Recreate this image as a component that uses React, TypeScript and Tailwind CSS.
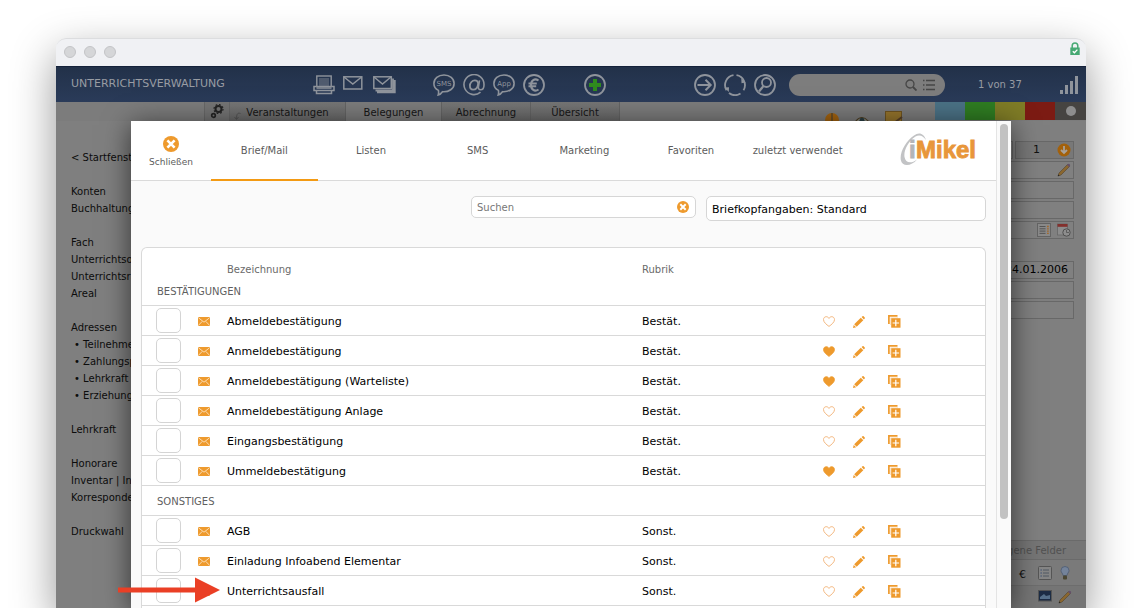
import { useState } from "react";

interface Entry {
  name: string;
  favorite: boolean;
}

interface Group {
  title: string;
  short: string;
  entries: Entry[];
}

const groups: Group[] = [
  {
    title: "BESTÄTIGUNGEN",
    short: "Bestät.",
    entries: [
      { name: "Abmeldebestätigung", favorite: false },
      { name: "Anmeldebestätigung", favorite: true },
      { name: "Anmeldebestätigung (Warteliste)", favorite: true },
      { name: "Anmeldebestätigung Anlage", favorite: false },
      { name: "Eingangsbestätigung", favorite: false },
      { name: "Ummeldebestätigung", favorite: true },
    ],
  },
  {
    title: "SONSTIGES",
    short: "Sonst.",
    entries: [
      { name: "AGB", favorite: false },
      { name: "Einladung Infoabend Elementar", favorite: false },
      { name: "Unterrichtsausfall", favorite: false },
    ],
  },
];

const dialogTabs = [
  "Brief/Mail",
  "Listen",
  "SMS",
  "Marketing",
  "Favoriten",
  "zuletzt verwendet",
];

// Each inner list is one block of the side menu
const menu = [
  ["< Startfenster"],
  ["Konten", "Buchhaltung"],
  ["Fach", "Unterrichtsort", "Unterrichtsraum", "Areal"],
  ["Adressen", "• Teilnehmer", "• Zahlungspfl.", "• Lehrkraft", "• Erziehungsb."],
  ["Lehrkraft"],
  ["Honorare", "Inventar | Info", "Korrespondenz"],
  ["Druckwahl"],
];

const iconButton = "flex items-center justify-center";

const CloseIcon = ({ className }: { className: string }) => (
  <svg viewBox="0 0 16 16" className={className}>
    <circle cx="8" cy="8" r="8" fill="#ee9a2d" />
    <path d="M4.400 4.400l7.200 7.200M11.600 4.400l-7.200 7.200" stroke="#fff" strokeWidth="2.600" />
  </svg>
);

const EnvelopeIcon = () => (
  <svg viewBox="0 0 12 9" className="h-[9px] w-3">
    <rect width="12" height="9" rx="1" fill="#ee9a2d" />
    <path
      d="M.5 .8l5.500 4.400L11.500 .8M.5 8.300l3.700-3.900M11.500 8.300L7.800 4.400"
      fill="none"
      stroke="#fde3c0"
      strokeWidth=".9"
    />
  </svg>
);

const HeartIcon = ({ filled }: { filled: boolean }) => (
  <svg viewBox="0 0 12 11" className="h-[11px] w-3">
    <path
      d="M6 10.400C3.500 8.600.5 6.200.5 3.600.5 1.900 1.700.7 3.200.7 4.400.7 5.400 1.300 6 2.400 6.600 1.300 7.600.7 8.800.7c1.500 0 2.700 1.200 2.700 2.900 0 2.600-3 5-5.500 6.800z"
      fill={filled ? "#ee9a2d" : "none"}
      stroke={filled ? "#ee9a2d" : "#f3b77f"}
      strokeWidth={filled ? ".8" : "1"}
    />
  </svg>
);

const PencilIcon = () => (
  <svg viewBox="0 0 12 12" className="size-3" fill="#ee9a2d">
    <path d="M7.800 1.700l2.500 2.500-6.600 6.600-2.500-2.500zM8.600 1.100l.9-.8q.6-.5 1.100 0l1.100 1.100q.5.500 0 1.100l-.8.900zM.7 8.900l2.400 2.400L0 12z" />
  </svg>
);

const DuplicateIcon = () => (
  <svg viewBox="0 0 13 13" className="size-[13px]">
    <path d="M.9 9V.9H9.500" fill="none" stroke="#ee9a2d" strokeWidth="1.700" />
    <path d="M2.600 10V2.800H10" fill="none" stroke="#f8cf9a" strokeWidth=".6" />
    <rect x="3.200" y="3.200" width="9.300" height="9.500" fill="#ee9a2d" />
    <path d="M7.800 4.700v6.600M4.600 8h6.500" stroke="#fff" strokeWidth="1.200" />
  </svg>
);

const ColorPencilIcon = () => (
  <svg viewBox="0 0 14 14" className="size-3.5">
    <path d="M1 13l1-3 8.500-8.500 2 2L4 12z" fill="#8a672f" stroke="#4a3c28" strokeWidth=".5" />
    <path d="M10 2l1-1q1-.5 1.700.2T13 3l-1 1z" fill="#64506a" />
    <path d="M.8 13.200l.6-1.700 1.100 1.100z" fill="#222" />
  </svg>
);

const PrinterIcon = () => (
  <svg viewBox="0 0 22 20" className="h-5 w-[22px]" fill="none" stroke="#8f949c">
    <rect x="3.800" y="1" width="14.400" height="10.500" strokeWidth="1.400" />
    <path d="M6 4h10M6 6h10M6 8h10M6 10h10" strokeWidth=".8" />
    <path d="M3.500 11.500H1v4h20v-4h-2.500M3.500 13h15M3.500 15.500v3h15v-3" strokeWidth="1.500" />
  </svg>
);

const MailIcon = () => (
  <svg viewBox="0 0 22 20" className="h-5 w-[22px]" fill="none" stroke="#8f949c" strokeWidth="1.500">
    <rect x=".8" y="1.800" width="18" height="12.200" />
    <path d="M1 2l8.800 7L18.600 2" />
  </svg>
);

const MailStackIcon = () => (
  <svg viewBox="0 0 24 20" className="h-5 w-6" fill="none" stroke="#8f949c" strokeWidth="1.500">
    <path d="M20 3.500v12H2.500M21.800 5v12.300H4" strokeWidth="1.800" />
    <rect x=".8" y="1.800" width="17.500" height="11.700" />
    <path d="M1 2l8.500 7L18 2" />
  </svg>
);

const SpeechIcon = ({ text }: { text: string }) => (
  <svg viewBox="0 0 22 22" className="size-[22px]">
    <path
      d="M11 1C5.200 1 .9 4.700.9 9.400c0 3 1.700 5.500 4.500 7 .3 1.500.3 3-.2 4.600 1.900-.6 3.300-1.800 4.300-3.300 6.400.5 11.600-3 11.600-8.300C21.100 4.700 16.800 1 11 1z"
      fill="none"
      stroke="#8f949c"
      strokeWidth="1.600"
    />
    <text x="11" y="12" textAnchor="middle" fontSize="7" fill="#8f949c">
      {text}
    </text>
  </svg>
);

const CircleIcon = ({ children }: { children: React.ReactNode }) => (
  <svg viewBox="0 0 22 22" className="size-[22px]" fill="none" stroke="#8f949c">
    <circle cx="11" cy="11" r="10" strokeWidth="1.800" />
    {children}
  </svg>
);

const Logo = () => (
  <svg viewBox="0 0 80 36" className="mb-1 h-9 w-20">
    <path
      d="M14 4.500C19 .5 24 2.500 26 9 23.500 5 19.500 3 15.500 5.500 8 10 3.500 20 4.500 26 5.500 31.500 10.500 33.500 17 28.500 11.500 35.500 2 36 .8 29-.5 21 6 10 14 4.500z"
      fill="#c2c3c5"
    />
    <text y="27" fontFamily="Liberation Sans, Arial, sans-serif" fontWeight="700" fontSize="24" strokeWidth=".9">
      <tspan x="9" fill="#b4b5b7" stroke="#b4b5b7">
        i
      </tspan>
      <tspan x="16" fill="#e8963a" stroke="#e8963a">
        Mikel
      </tspan>
    </text>
  </svg>
);

const TitleBar = () => (
  <div className="flex h-7 shrink-0 items-center gap-2 rounded-t-[10px] border-t border-[#dcdddf] bg-[#f0f1f4] pr-1.5 pb-0.5 pl-2">
    <span className="size-3 rounded-full border border-[#c3c4c7] bg-[#d5d6d8]" />
    <span className="size-3 rounded-full border border-[#c3c4c7] bg-[#d5d6d8]" />
    <span className="size-3 rounded-full border border-[#c3c4c7] bg-[#d5d6d8]" />
    <svg viewBox="0 0 10 14" className="mb-1.5 ml-auto h-3.5 w-2.5">
      <path d="M2.200 6V3.700a2.800 2.800 0 015.600 0V6" fill="none" stroke="#46a973" strokeWidth="1.500" />
      <rect x=".3" y="5.500" width="9.400" height="7.500" fill="#46a973" />
      <path d="M2.800 9.200l1.600 1.600 3-3.200" fill="none" stroke="#fff" strokeWidth="1.300" />
    </svg>
  </div>
);

const Toolbar = () => (
  <header className="flex h-9 shrink-0 items-center border-t border-[#14213a] bg-gradient-to-b from-[#223149] to-[#2a3b59] pr-2 pl-[15px] text-[#989ca3]">
    <h1 className="w-[242px] text-[11px] font-medium">UNTERRICHTSVERWALTUNG</h1>
    <div className="flex gap-2">
      <button aria-label="Drucken"><PrinterIcon /></button>
      <button aria-label="Mail"><MailIcon /></button>
      <button aria-label="Serienmail"><MailStackIcon /></button>
    </div>
    <div className="ml-9 flex gap-2">
      <button aria-label="SMS"><SpeechIcon text="SMS" /></button>
      <button aria-label="E-Mail">
        <svg viewBox="0 0 22 22" className="size-[22px]" fill="none" stroke="#8f949c">
          <path d="M17.500 18.200A10 10 0 1121 11c0 3-1.500 4.700-3.400 4.700-1.800 0-2.500-1.200-2.100-3.200l1-6.200" strokeWidth="1.600" />
          <path d="M15.200 9.600c-.2-2-1.500-3.200-3.300-3.200-2.800 0-5 2.500-5 5.400 0 2.300 1.300 3.800 3.200 3.800 2.700 0 4.700-2.500 5.100-6z" strokeWidth="1.800" />
        </svg>
      </button>
      <button aria-label="App"><SpeechIcon text="App" /></button>
      <button aria-label="Zahlung">
        <CircleIcon>
          <path d="M15.500 6.500c-4-2.800-7.500 0-7.500 4.500s3.500 7.300 7.500 4.500M5.500 9.500h8.300M5.500 12.300h7.700" strokeWidth="2.100" />
        </CircleIcon>
      </button>
    </div>
    <button aria-label="Neu" className="ml-[39px]">
      <CircleIcon>
        <path d="M11 5v12M5 11h12" stroke="#2f8a1e" strokeWidth="4" />
      </CircleIcon>
    </button>
    <div className="ml-[88px] flex gap-2">
      <button aria-label="Weiter">
        <CircleIcon>
          <path d="M3.500 11h13M11.500 5.800l5.200 5.200-5.200 5.200" strokeWidth="2" />
        </CircleIcon>
      </button>
      <button aria-label="Aktualisieren">
        <svg viewBox="0 0 22 22" className="size-[22px]" fill="none" stroke="#8f949c" strokeWidth="1.800">
          <path d="M9.500 1.200A10 10 0 002.500 16.200M5 19a10 10 0 0011.500.5M12.500 1.200a10 10 0 017 15" />
          <path d="M.5 13.500l4.300 4.500.2-4.800zM21.700 8.500l-4.400-4 .2 4.800z" fill="#8f949c" stroke="none" />
        </svg>
      </button>
      <button aria-label="Finden">
        <CircleIcon>
          <circle cx="12.500" cy="8.500" r="4.500" strokeWidth="1.800" />
          <path d="M9.500 12l-4.500 5.500" strokeWidth="2.200" />
        </CircleIcon>
      </button>
    </div>
    <label className="ml-[13px] flex h-[22px] w-[156px] items-center gap-1.5 rounded-full bg-[#7d7d7d] pr-2.5 pl-3">
      <input aria-label="Schnellsuche" className="min-w-0 flex-1 text-[10px] outline-none" />
      <svg viewBox="0 0 12 12" className="size-3" fill="none" stroke="#464646" strokeWidth="1.300">
        <circle cx="5" cy="5" r="4" />
        <path d="M8 8l3.500 3.500" strokeWidth="1.800" />
      </svg>
      <svg viewBox="0 0 12 12" className="size-3" stroke="#464646" strokeWidth="1.300">
        <path d="M0 1.500h1.500M3 1.500h9M0 6h1.500M3 6h9M0 10.500h1.500M3 10.500h9" />
      </svg>
    </label>
    <span className="ml-[33px] text-[10px] font-medium">1 von 37</span>
    <svg viewBox="0 0 18 18" className="ml-auto size-[18px]" fill="#8f949c">
      <path d="M0 14h3v4H0zM5 9h3v9H5zM10 5h3v13h-3zM15 0h3v18h-3z" />
    </svg>
  </header>
);

const ModuleTabs = () => (
  <nav className="flex h-[19px] shrink-0 bg-[#7c7c7c] pl-[148px] text-[10px] text-[#161616]">
    <button aria-label="Einstellungen" className="flex w-[26px] justify-center border-x border-[#686868] bg-[#757575] pt-0.5">
      <svg viewBox="0 0 14 15" className="h-[15px] w-3.5" fill="none" stroke="#242424">
        <circle cx="8.500" cy="5" r="3" strokeWidth="2" />
        <circle cx="8.500" cy="5" r="4.500" strokeWidth="1.200" strokeDasharray="1.700 1.830" />
        <circle cx="3.500" cy="11.500" r="1.800" strokeWidth="1.700" />
      </svg>
    </button>
    <button className="relative w-[116px] border-r border-[#646464] bg-gradient-to-b from-[#767676] to-[#6a6a6a] pt-0.5">
      <svg viewBox="0 0 7 9" className="absolute bottom-0 left-1 h-[9px] w-[7px]" fill="none" stroke="#555">
        <path d="M6.500 1.500C3.500.5 2.500 2 2.500 7M.5 5l2 2.500L4.500 5" />
      </svg>
      Veranstaltungen
    </button>
    <button className="w-24 border-r border-[#646464] pt-0.5">Belegungen</button>
    <button className="w-[89px] border-r border-[#646464] bg-gradient-to-b from-[#767676] to-[#6a6a6a] pt-0.5">
      Abrechnung
    </button>
    <button className="w-[89px] border-r border-[#646464] bg-gradient-to-b from-[#767676] to-[#6a6a6a] pt-0.5">
      Übersicht
    </button>
    <div className="ml-auto flex items-start gap-4 pt-[9px] pr-8">
      <svg viewBox="0 0 14 14" className="mt-0.5 size-3.5">
        <circle cx="7" cy="7" r="7" fill="#a5640f" />
        <path d="M7 0v9" stroke="#5f4a2a" strokeWidth="1.500" />
      </svg>
      <svg viewBox="0 0 16 12" className="mt-1 h-3 w-3.5">
        <path d="M1 6q7-8 14 0-7 6-14 0z" fill="#8a8a80" stroke="#4d3d20" strokeWidth="1.300" />
        <circle cx="8" cy="5" r="2.800" fill="#2a3f44" />
      </svg>
      <svg viewBox="0 0 18 16" className="h-4 w-[18px]">
        <rect x=".5" y=".5" width="16" height="15" fill="#96752c" stroke="#6f5420" />
        <path d="M9 12l8-6" stroke="#584028" strokeWidth="2" />
      </svg>
    </div>
    <div className="flex h-[18px]">
      <button aria-label="Blau" className="w-[30px] bg-[#4b7286]" />
      <button aria-label="Grün" className="w-[30px] bg-[#2f7d22]" />
      <button aria-label="Gelb" className="w-[30px] bg-[#7f7c26]" />
      <button aria-label="Rot" className="w-[30px] bg-[#7c1b13]" />
      <button aria-label="Grau" className="flex w-[31px] items-center justify-center bg-[#464441]">
        <span className="size-2.5 rounded-full bg-[#8d8d8d]" />
      </button>
    </div>
  </nav>
);

const field = "flex h-[18px] items-center justify-end border border-[#686868] bg-[#808080]";

const RecordPanel = () => (
  <div className="w-[186px] text-[#111]">
    <div className="flex flex-col gap-0.5 pt-5 pr-3">
      <div className="flex gap-0.5">
        <div className={`${field} flex-1`} />
        <div className="flex h-[18px] w-[59px] items-center justify-between border border-[#686868] bg-[#787878] pr-0.5 pl-[17px] text-[11px]">
          1
          <svg viewBox="0 0 14 14" className="size-3.5">
            <circle cx="7" cy="7" r="6.500" fill="#a3610b" />
            <path d="M7 3v7M4 7l3 3 3-3" fill="none" stroke="#a8a29a" strokeWidth="1.800" />
          </svg>
        </div>
      </div>
      <div className={`${field} pr-0.5`}><ColorPencilIcon /></div>
      <div className={field} />
      <div className={field} />
      <div className={`${field} gap-1.5 pr-0.5`}>
        <svg viewBox="0 0 14 14" className="size-3.5">
          <rect x=".5" y=".5" width="13" height="13" fill="#8a8a8a" stroke="#646464" />
          <path d="M2.500 3.500h6M2.500 5.800h6M2.500 8.100h6M2.500 10.400h6" stroke="#555" />
          <path d="M10 3.500h1.800M10 5.800h1.800M10 8.100h1.800M10 10.400h1.800" stroke="#a36a2e" strokeWidth="1.300" />
        </svg>
        <svg viewBox="0 0 14 14" className="size-3.5">
          <rect x=".5" y="1" width="10" height="11" fill="#8c8c8c" stroke="#666" strokeWidth=".8" />
          <rect x=".5" y="1" width="10" height="2.800" fill="#83302d" />
          <circle cx="9.500" cy="9.500" r="3.700" fill="#8d8d8d" stroke="#505050" />
          <path d="M9.500 7v2.500h2.500" fill="none" stroke="#505050" strokeWidth=".8" />
        </svg>
      </div>
      <div className={`${field} mt-5 pr-[5px] text-[11px] text-black`}>24.01.2006</div>
      <div className={field} />
      <div className={field} />
    </div>
    <div className="mt-[221px] flex h-5 items-center justify-end border-y border-[#6a6a6a] bg-[#757575] pr-5 text-[10px] font-medium text-[#515151]">
      Eigene Felder
    </div>
    <div className="flex h-[26px] items-center justify-end gap-1.5 border-b border-[#6d6d6d] bg-[#7a7a7a] pr-3.5">
      <span className="mr-1.5 pt-1.5 text-[11px]">€</span>
      <svg viewBox="0 0 14 14" className="size-3.5">
        <rect x=".5" y=".5" width="13" height="13" rx="1" fill="#858585" stroke="#555" />
        <path d="M5 4h6M5 7h6M5 10h6" stroke="#505862" />
        <path d="M2.500 4h1.300M2.500 7h1.300M2.500 10h1.300" stroke="#334a70" />
      </svg>
      <svg viewBox="0 0 14 14" className="size-3.5">
        <path d="M7 .5a4 4 0 00-4 4c0 2 1.800 2.800 2 5h4c.2-2.200 2-3 2-5a4 4 0 00-4-4z" fill="#74839a" stroke="#4c5a72" strokeWidth=".8" />
        <rect x="5" y="9.500" width="4" height="4" rx="1" fill="#4b4733" />
      </svg>
    </div>
    <div className="flex h-[26px] items-start justify-end gap-1.5 bg-[#757575] pt-1 pr-3.5">
      <svg viewBox="0 0 14 12" className="h-3 w-3.5">
        <rect x=".5" y=".5" width="13" height="10.500" fill="#1d2d45" stroke="#555" />
        <path d="M2 7l4-3 2 2 4-1v4H2z" fill="#56708a" />
      </svg>
      <ColorPencilIcon />
    </div>
  </div>
);

const SideMenu = () => (
  <aside className="flex w-[148px] flex-col gap-[17px] pt-7 pl-[15px] text-[10px] leading-[17px] text-[#0c0c0c]">
    {menu.map((block) => (
      <ul key={block[0]}>
        {block.map((item) => (
          <li key={item} className={item.startsWith("•") ? "pl-[3px]" : ""}>
            <a href="#" className="whitespace-nowrap">{item}</a>
          </li>
        ))}
      </ul>
    ))}
  </aside>
);

const TemplateTable = () => {
  const [favorites, setFavorites] = useState(
    groups.flatMap((g) => g.entries.filter((e) => e.favorite).map((e) => e.name)),
  );

  const toggleFavorite = (name: string) => {
    setFavorites((old) =>
      old.includes(name) ? old.filter((n) => n !== name) : [...old, name],
    );
  };

  return (
    <div className="mx-2.5 rounded-t-md border-x border-t border-[#d9d9d9] bg-white pb-8">
      <table className="w-full table-fixed border-separate border-spacing-0 text-left text-[11px] text-black">
        <colgroup>
          <col className="w-[45px]" />
          <col className="w-10" />
          <col />
          <col className="w-[172px]" />
          <col className="w-[30px]" />
          <col className="w-[30px]" />
          <col className="w-10" />
          <col className="w-[71px]" />
        </colgroup>
        <thead>
          <tr className="h-7 text-[10px] leading-3 text-[#6a6a6a]">
            <th colSpan={2} />
            <th className="p-0 pt-4 font-normal">Bezeichnung</th>
            <th className="p-0 pt-4 font-normal">Rubrik</th>
            <th colSpan={4} />
          </tr>
        </thead>
        {groups.map((group) => (
          <tbody key={group.title}>
            <tr className="h-[30px]">
              <th
                colSpan={8}
                className="border-b border-[#d9d9d9] p-0 pt-0.5 pl-[15px] text-[10px] font-normal text-[#5f5f5f]"
              >
                {group.title}
              </th>
            </tr>
            {group.entries.map(({ name }) => (
              <tr key={name} className="h-[30px] *:border-b *:border-[#d9d9d9]">
                <td className="p-0">
                  <input
                    type="checkbox"
                    aria-label={name}
                    className="ml-3.5 block size-[25px] appearance-none rounded-[5px] border border-[#d4d4d4] bg-white checked:bg-[#ee9a2d]"
                  />
                </td>
                <td className="p-0 pt-0.5">
                  <span className="ml-[11px] block w-3"><EnvelopeIcon /></span>
                </td>
                <td className="p-0 pt-[3px]">{name}</td>
                <td className="p-0 pt-[3px]">{group.short}</td>
                <td className="p-0 pt-0.5">
                  <button aria-label="Favorit" className={`${iconButton} w-full`} onClick={() => toggleFavorite(name)}>
                    <HeartIcon filled={favorites.includes(name)} />
                  </button>
                </td>
                <td className="p-0 pt-0.5">
                  <button aria-label="Bearbeiten" className={`${iconButton} w-full`}><PencilIcon /></button>
                </td>
                <td className="p-0 pt-0.5">
                  <button aria-label="Duplizieren" className={`${iconButton} w-full`}><DuplicateIcon /></button>
                </td>
                <td />
              </tr>
            ))}
          </tbody>
        ))}
      </table>
    </div>
  );
};

const TemplateDialog = () => {
  const [activeTab, setActiveTab] = useState(dialogTabs[0]);
  const [query, setQuery] = useState("");

  return (
    <div
      role="dialog"
      aria-label="Druckwahl"
      className="absolute inset-x-[75px] top-[55px] bottom-0 flex bg-[#fafafa] shadow-[0_4px_26px_rgba(0,0,0,0.6)]"
    >
      <div className="min-w-0 flex-1 overflow-hidden">
        <div className="flex h-[60px] items-center justify-between border-b border-[#dadada] bg-white pr-4 text-[#5c5c5c]">
          <div className="flex h-[60px]">
            <button className="flex w-20 flex-col items-center gap-1 pt-[15px] text-[9px]">
              <CloseIcon className="size-4" />
              Schließen
            </button>
            <div className="grid w-[640px] grid-cols-6 text-[10px]">
              {dialogTabs.map((tab) => (
                <button
                  key={tab}
                  onClick={() => setActiveTab(tab)}
                  className={`border-b-2 pt-0.5 ${activeTab === tab ? "border-[#f39a13]" : "border-transparent"}`}
                >
                  {tab}
                </button>
              ))}
            </div>
          </div>
          <Logo />
        </div>

        <div className="flex h-[66px] items-start justify-end gap-2.5 pt-[15px] pr-2.5">
          <div className="flex h-[22px] w-[225px] items-center rounded-[5px] border border-[#d6d6d6] bg-white pr-1.5 pl-[5px]">
            <input
              aria-label="Suchen"
              placeholder="Suchen"
              value={query}
              onChange={(e) => setQuery(e.target.value)}
              className="min-w-0 flex-1 text-[10px] text-[#333] outline-none placeholder:text-[#777]"
            />
            <button aria-label="Suche leeren" onClick={() => setQuery("")}>
              <CloseIcon className="size-3" />
            </button>
          </div>
          <select
            aria-label="Briefkopfangaben"
            className="h-[25px] w-[280px] appearance-none rounded-[5px] border border-[#d6d6d6] bg-white pt-[3px] pl-[5px] text-[11px] text-black"
          >
            <option>Briefkopfangaben: Standard</option>
          </select>
        </div>

        <TemplateTable />
      </div>

      <div className="w-[15px] border-l border-[#e4e4e4] pt-[3px] pl-[3px]">
        <div className="h-[395px] w-2 rounded-full bg-[#c2c2c2]" />
      </div>
    </div>
  );
};

export default function App() {
  return (
    <div className="h-screen overflow-hidden bg-white px-14 pt-[38px] font-['DejaVu_Sans',Verdana,sans-serif]">
      <div className="flex h-full flex-col rounded-t-[10px] shadow-[0_16px_44px_rgba(0,0,0,0.42)]">
        <TitleBar />
        <div className="relative flex min-h-0 flex-1 flex-col overflow-hidden bg-[#7f7f7f]">
          <Toolbar />
          <ModuleTabs />
          <div className="flex flex-1 justify-between">
            <SideMenu />
            <RecordPanel />
          </div>
          <TemplateDialog />
          {/* Pointer to the template that is explained */}
          <svg viewBox="0 0 102 26" className="absolute top-[511px] left-[62px] h-[26px] w-[102px]" fill="#ea3f25">
            <path d="M0 10.500h77V.5L102 13 77 25.500v-10H0z" />
          </svg>
        </div>
      </div>
    </div>
  );
}
